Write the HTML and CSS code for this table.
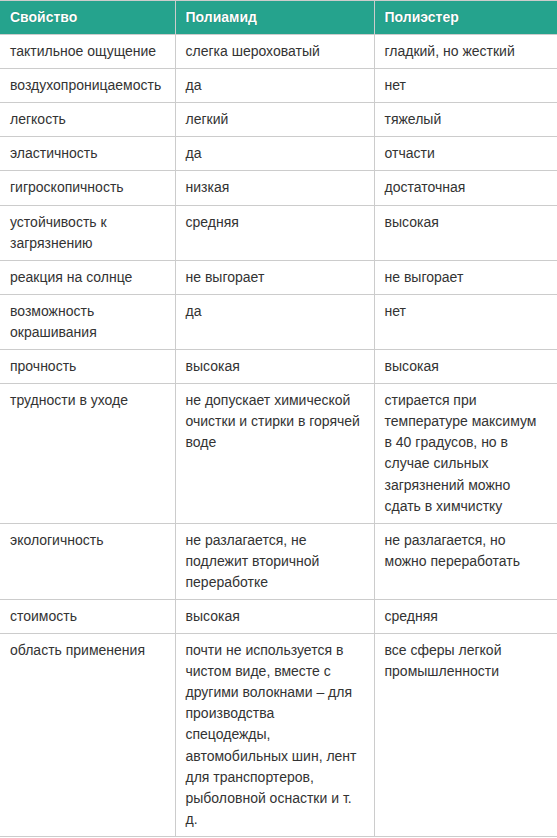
FILE: index.html
```html
<!DOCTYPE html>
<html lang="ru">
<head>
<meta charset="utf-8">
<link rel="stylesheet" href="styles.css">
</head>
<body>
<table class="props">
  <colgroup>
    <col class="c1"><col class="c2"><col class="c3">
  </colgroup>
  <thead>
    <tr><th>Свойство</th><th>Полиамид</th><th>Полиэстер</th></tr>
  </thead>
  <tbody>
    <tr><td>тактильное ощущение</td><td>слегка шероховатый</td><td>гладкий, но жесткий</td></tr>
    <tr><td>воздухопроницаемость</td><td>да</td><td>нет</td></tr>
    <tr><td>легкость</td><td>легкий</td><td>тяжелый</td></tr>
    <tr><td>эластичность</td><td>да</td><td>отчасти</td></tr>
    <tr><td>гигроскопичность</td><td>низкая</td><td>достаточная</td></tr>
    <tr><td>устойчивость к загрязнению</td><td>средняя</td><td>высокая</td></tr>
    <tr><td>реакция на солнце</td><td>не выгорает</td><td>не выгорает</td></tr>
    <tr><td>возможность окрашивания</td><td>да</td><td>нет</td></tr>
    <tr><td>прочность</td><td>высокая</td><td>высокая</td></tr>
    <tr><td>трудности в уходе</td><td>не допускает химической очистки и стирки в горячей воде</td><td>стирается при температуре максимум в 40 градусов, но в случае сильных загрязнений можно сдать в химчистку</td></tr>
    <tr><td>экологичность</td><td>не разлагается, не подлежит вторичной переработке</td><td>не разлагается, но можно переработать</td></tr>
    <tr><td>стоимость</td><td>высокая</td><td>средняя</td></tr>
    <tr><td>область применения</td><td>почти не используется в чистом виде, вместе с другими волокнами – для производства спецодежды, автомобильных шин, лент для транспортеров, рыболовной оснастки и т. д.</td><td>все сферы легкой промышленности</td></tr>
  </tbody>
</table>
</body>
</html>
```
FILE: styles.css
```css
html, body {
  margin: 0;
  padding: 0;
  background: #fff;
}
body {
  font-family: "Liberation Sans", Arial, sans-serif;
  font-size: 14px;
  color: #333;
}
.props {
  width: 557px;
  border-collapse: collapse;
  table-layout: fixed;
}
.c1 { width: 175px; }
.c2 { width: 199px; }
.c3 { width: 183px; }
.props th,
.props td {
  border: 1px solid #ccc;
  padding: 6px 11px 6px 10px;
  line-height: 21.1px;
  text-align: left;
  vertical-align: top;
}
.props th:first-child,
.props td:first-child {
  border-left: none;
}
.props th {
  background: #25a38d;
  color: #fff;
  font-weight: bold;
  text-shadow: 0 0 1px rgba(0,0,0,0.35);
}
```
